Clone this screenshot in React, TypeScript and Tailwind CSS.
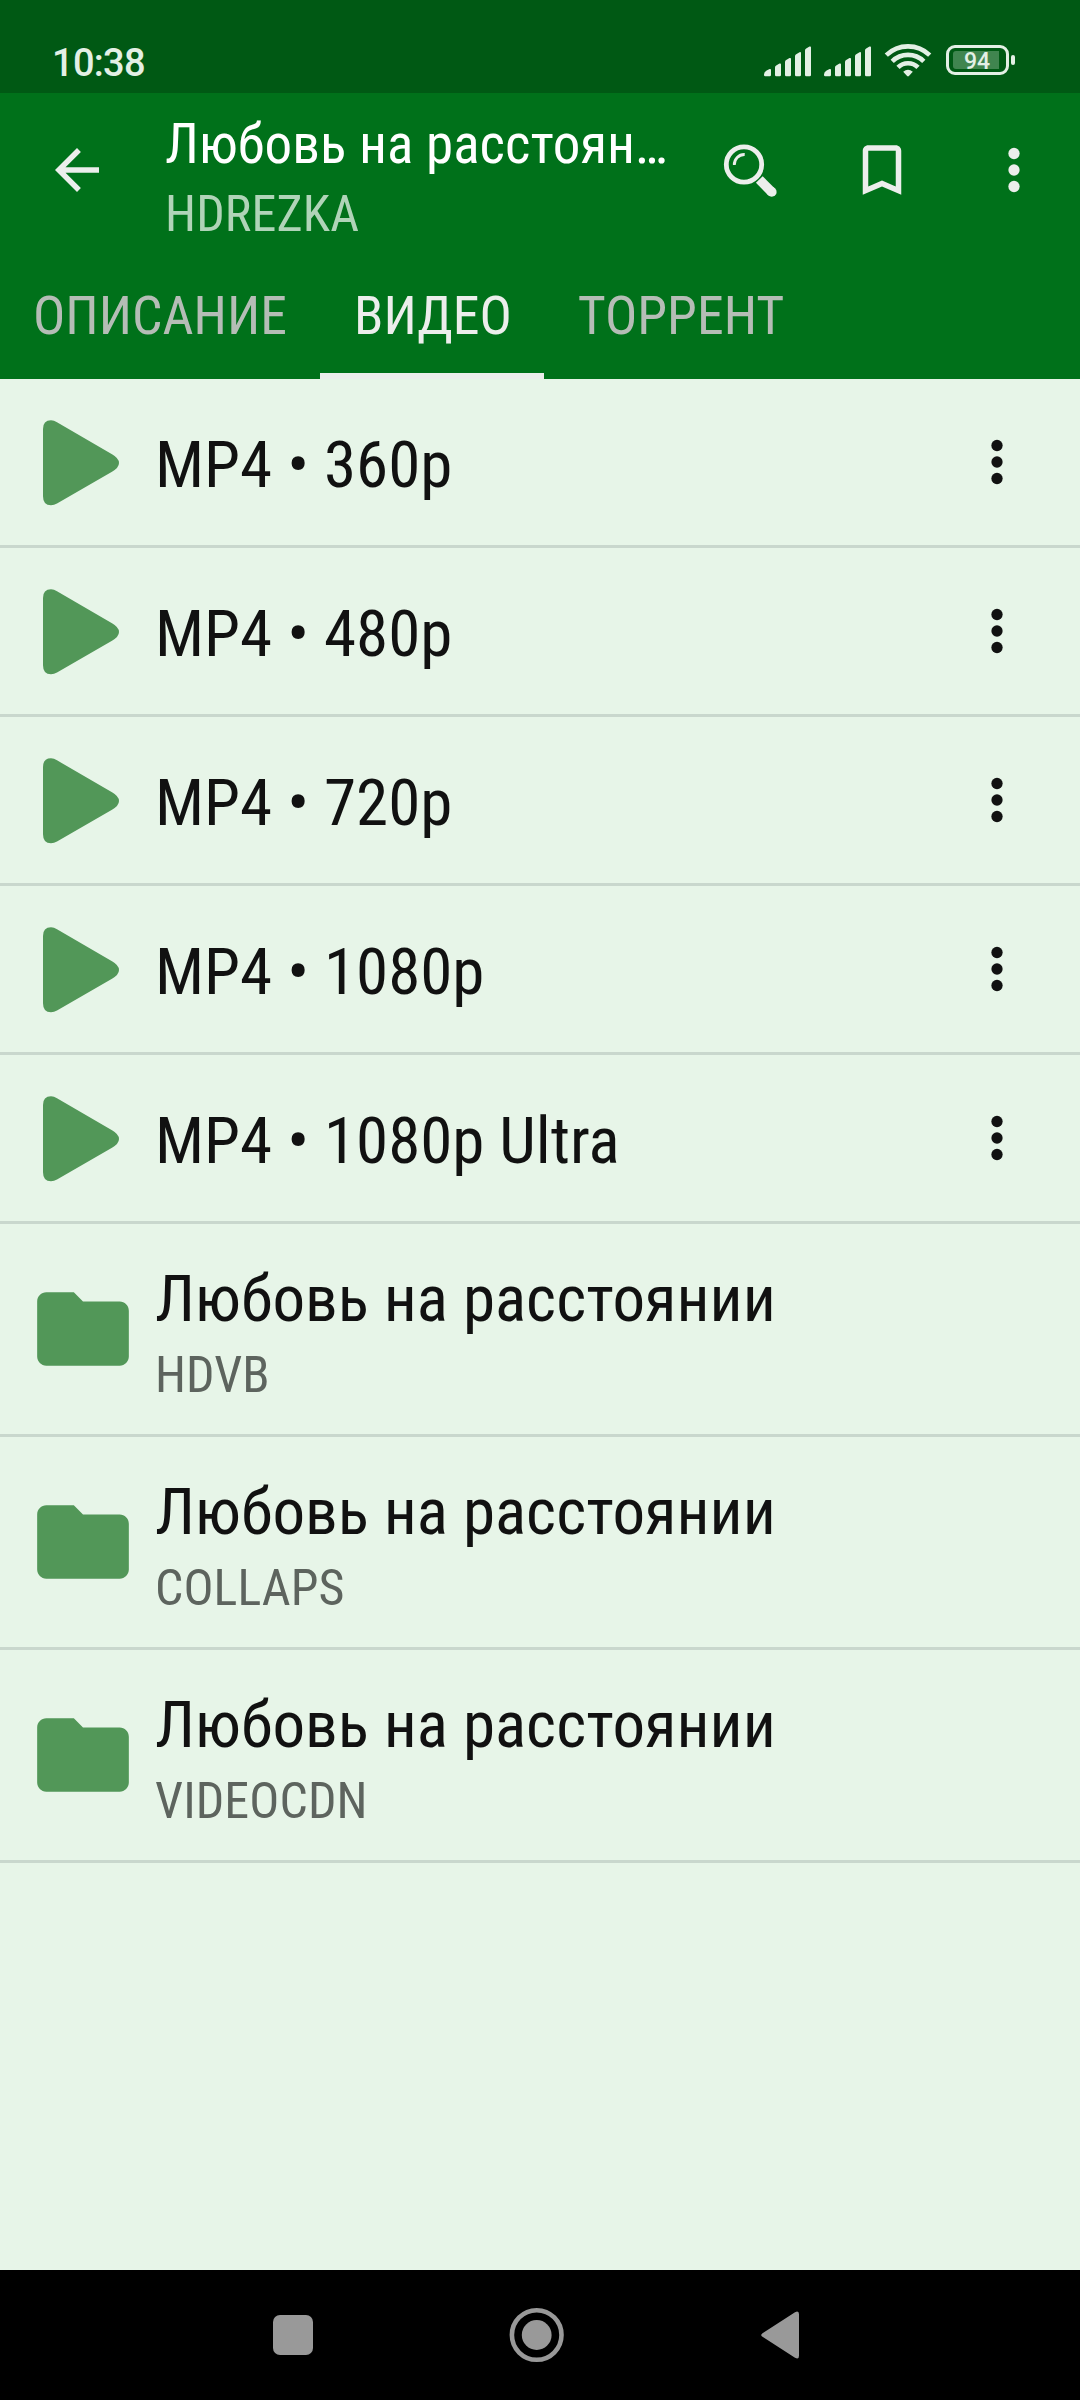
const videos = ["MP4 • 360p", "MP4 • 480p", "MP4 • 720p", "MP4 • 1080p", "MP4 • 1080p Ultra"];

const folders = [
  { title: "Любовь на расстоянии", source: "HDVB" },
  { title: "Любовь на расстоянии", source: "COLLAPS" },
  { title: "Любовь на расстоянии", source: "VIDEOCDN" },
];

function Signal() {
  return (
    <svg width="48" height="32" viewBox="0 0 48 32" fill="#e3f0e5">
      <path d="M0 29.5Q0 26.6 2.6 25.4L5.6 24Q7 23.6 7 25v5q0 1.3-1.3 1.3H1.3Q0 31.3 0 30z" />
      <path d="M11 22.5q0-1.3 1.2-1.9l3.3-2q1.5-.6 1.5.8V30q0 1.3-1.3 1.3h-3.4Q11 31.3 11 30z" />
      <path d="M21 17q0-1.3 1.2-1.9l3.3-2q1.5-.6 1.5.8V30q0 1.3-1.3 1.3h-3.4Q21 31.3 21 30z" />
      <path d="M31 11.2q0-1.3 1.2-1.9l3.3-2q1.5-.6 1.5.8V30q0 1.3-1.3 1.3h-3.4Q31 31.3 31 30z" />
      <path d="M41 5.5q0-1.3 1.2-1.9l3.3-2q1.5-.6 1.5.8V30q0 1.3-1.3 1.3h-3.4Q41 31.3 41 30z" />
    </svg>
  );
}

function Wifi() {
  return (
    <svg width="48" height="36" viewBox="0 0 48 36" fill="none" stroke="#e3f0e5" strokeWidth="4.6">
      <path d="M2.3 13.2a31 31 0 0 1 43.4 0" />
      <path d="M8.2 19.4a22.500 22.500 0 0 1 31.6 0" />
      <path d="M14 25.3a14.200 14.200 0 0 1 20 0" />
      <path d="M19.2 29.7q4.8-4 9.6 0L24.9 34q-.9.9-1.8 0z" fill="#e3f0e5" stroke="none" />
    </svg>
  );
}

function Dots({ color }: { color: string }) {
  return (
    <svg width="66" height="66" viewBox="0 0 24 24" fill={color}>
      <circle cx="12" cy="6" r="2.05" />
      <circle cx="12" cy="12" r="2.05" />
      <circle cx="12" cy="18" r="2.05" />
    </svg>
  );
}

export default function App() {
  return (
    <div className="w-[1080px] h-[2400px] flex flex-col bg-[#e7f5e8] font-['Roboto_Condensed','Roboto',sans-serif] overflow-hidden">
      <div className="h-[93px] flex shrink-0 bg-[#005914] text-[#e3f0e5]">
        <div className="pl-[52px] pt-[39px] text-[38px] leading-[48px] tracking-[-0.7px] font-medium font-['Roboto',sans-serif]">10:38</div>
        <div className="ml-auto pt-[42px] pr-[65px] flex items-start">
          <div className="mt-[3px] mr-3"><Signal /></div>
          <div className="mt-[3px] mr-3"><Signal /></div>
          <div className="mr-[14px]"><Wifi /></div>
          <div className="mt-[3px] w-[63px] h-[30px] border-3 border-[#e3f0e5] rounded-[9px] py-[3px] pl-1">
            <div className="w-[46px] h-[18px] pl-[2px] bg-[#40854f] rounded-l-[3px] text-[23px] leading-[21px] font-medium text-center font-['Roboto',sans-serif]">94</div>
          </div>
          <div className="mt-[13px] ml-[2px] w-1 h-[10px] bg-[#e3f0e5] rounded-[2px]"></div>
        </div>
      </div>

      <div className="h-[286px] shrink-0 bg-[#00711a]">
        <div className="h-[154px] flex items-center">
          <svg className="ml-11" width="66" height="66" viewBox="0 0 24 24" fill="#eceeec">
            <path d="M20 11H7.83l5.59-5.59L12 4l-8 8 8 8 1.41-1.41L7.83 13H20v-2z" />
          </svg>
          <div className="ml-[55px] w-[510px] self-start pt-[19px]">
            <div className="text-[55px] leading-[64px] tracking-[0.05px] text-white truncate">Любовь на расстоян…</div>
            <div className="mt-[9px] text-[50px] leading-[58px] tracking-[0.15px] text-[#b0d4b8]">HDREZKA</div>
          </div>
          <svg className="ml-[42px]" width="66" height="66" viewBox="0 0 66 66" fill="none" stroke="#eceeec">
            <circle cx="27" cy="27.5" r="17.7" strokeWidth="4.8" />
            <path d="M17.3 28a10 10 0 0 1 10.4-10.5" strokeWidth="2.8" />
            <path d="M42.3 42.5L54.5 54.8" strokeWidth="9.5" />
            <circle cx="54.7" cy="54.9" r="4.9" fill="#eceeec" stroke="none" />
          </svg>
          <svg className="ml-[66px]" width="66" height="66" viewBox="0 0 24 24" fill="#eceeec">
            <path d="M17 3H7c-1.1 0-2 .9-2 2v16l7-3 7 3V5c0-1.1-.9-2-2-2zm0 15l-5-2.18L7 18V5h10v13z" />
          </svg>
          <div className="ml-[66px]"><Dots color="#eceeec" /></div>
        </div>
        <div className="h-[132px] flex text-[53.8px] leading-[138px] text-[#b5bdb6]">
          <div className="w-[320px] text-center">ОПИСАНИЕ</div>
          <div className="w-[224px] pl-[2px] text-center text-[#eceeec] border-b-6 border-[#eceeec]">ВИДЕО</div>
          <div className="w-[274px] text-center">ТОРРЕНТ</div>
        </div>
      </div>

      <div className="flex-1 text-[#111] text-[65px] leading-[76px]">
        {videos.map((name) => (
          <div key={name} className="h-[169px] flex items-center border-b-3 border-[#c9d7cd]">
            <svg className="ml-[43px] mt-[2px]" width="76" height="86" viewBox="0 0 76 86" fill="#529758">
              <path d="M0 9Q0 .3 8 .3q3 0 6 2l55 32q7 4 7 8.700t-7 8.700L14 83.400q-3 1.800-6 1.800-8 0-8-9z" />
            </svg>
            <div className="ml-9 pt-[5px]">{name}</div>
            <div className="ml-auto mr-[50px]"><Dots color="#111" /></div>
          </div>
        ))}
        {folders.map((folder) => (
          <div key={folder.source} className="h-[213px] flex items-center border-b-3 border-[#c9d7cd]">
            <svg className="ml-7" width="110" height="110" viewBox="0 0 24 24" fill="#529758">
              <path d="M10 4H4c-1.1 0-2 .9-2 2v12c0 1.1.9 2 2 2h16c1.1 0 2-.9 2-2V8c0-1.1-.9-2-2-2h-8l-2-2z" />
            </svg>
            <div className="ml-[17px] self-start pt-[37px]">
              <div>{folder.title}</div>
              <div className="mt-[9px] text-[50px] leading-[58px] tracking-[0.1px] text-[#5d645e]">{folder.source}</div>
            </div>
          </div>
        ))}
      </div>

      <div className="h-[130px] shrink-0 bg-black flex items-center">
        <div className="ml-[273px] w-10 h-10 bg-[#999] rounded-[7px]"></div>
        <svg className="ml-[196px]" width="56" height="56" viewBox="0 0 56 56">
          <circle cx="27.700" cy="28" r="24.8" fill="none" stroke="#999" strokeWidth="4.6" />
          <circle cx="27.700" cy="28" r="14.9" fill="#999" />
        </svg>
        <svg className="ml-[196px]" width="38" height="48" viewBox="0 0 38 48" fill="#999">
          <path d="M1.5 22.2L34 1.3q4-2.1 4 2v41.4q0 4.1-4 2L1.5 25.8q-2.6-1.8 0-3.6z" />
        </svg>
      </div>
    </div>
  );
}
